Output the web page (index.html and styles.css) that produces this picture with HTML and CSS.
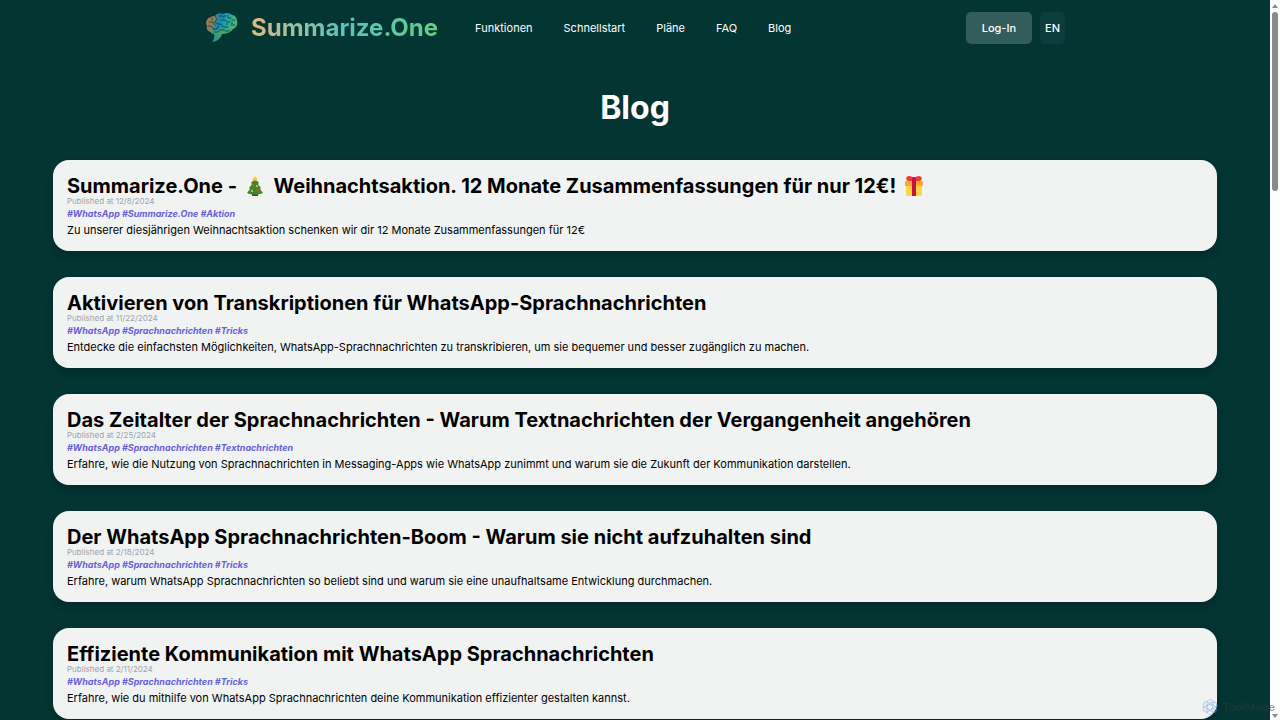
FILE: index.html
```html
<!doctype html>
<html lang="de">

<head>
    <title>Blog - Summarize.One</title>
    <meta charset="utf-8">
    <meta name="viewport" content="width=device-width, initial-scale=1">
    <link rel="stylesheet" href="styles.css">
</head>

<body>
    <div class="page">
        <header class="navbar">
            <a class="brand" href="#">
                <svg class="logo" viewBox="0 0 34 32" aria-hidden="true">
                    <defs>
                        <linearGradient id="brain" x1="0" y1="0.3" x2="1" y2="0.5">
                            <stop offset="0" stop-color="#bd7442"/>
                            <stop offset="0.25" stop-color="#7e8259"/>
                            <stop offset="0.4" stop-color="#1586b4"/>
                            <stop offset="0.7" stop-color="#2aa99f"/>
                            <stop offset="1" stop-color="#55b86c"/>
                        </linearGradient>
                        <linearGradient id="stem" x1="0" y1="1" x2="0.6" y2="0">
                            <stop offset="0" stop-color="#258f9b"/>
                            <stop offset="1" stop-color="#4bab5e"/>
                        </linearGradient>
                    </defs>
                    <path fill="url(#brain)" d="M10 4C12 1 16 .5 18 2c3-2 7-1 9 1 3 0 5 3 5 6 1 4-1 7-4 8-2 3-6 4-9 3-4 2-9 2-12 0-4 0-6-3-5-6-2-4 0-8 4-9 1-1 2-1 4-1z"/>
                    <path fill="url(#stem)" d="M4 18c3 2 7 1 9-1 4 2 8 1 12-1l2 2c-2 3-7 4-10 4-1 4-5 8-10 8 2-2 3-5 2-8-2 0-4-2-5-4z"/>
                    <g fill="none" stroke="#07404a" stroke-width="0.8" stroke-linecap="round" stroke-linejoin="round">
                        <path d="M10 4l2 3-2 3 3 2h3l2 3h5M4 10h4l2 3M3 14h3l2 3h5M14 4h4l1 2M23 3v3h3M16 8h4l2 2h3M27 8h3M26 13h4M9 20h4l2-2h4M20 19h5M14 14l-2 2"/>
                    </g>
                    <g fill="#07404a">
                        <circle cx="20" cy="4" r="0.8"/>
                        <circle cx="27" cy="11" r="0.8"/>
                        <circle cx="22" cy="12" r="0.8"/>
                        <circle cx="7" cy="7" r="0.8"/>
                    </g>
                </svg>
                <span class="brand-name">Summarize.One</span>
            </a>
            <nav class="links">
                <a href="#">Funktionen</a>
                <a href="#">Schnellstart</a>
                <a href="#">Pläne</a>
                <a href="#">FAQ</a>
                <a href="#">Blog</a>
            </nav>
            <div class="actions">
                <button class="btn btn-login" type="button">Log-In</button>
                <button class="btn btn-lang" type="button">EN</button>
            </div>
        </header>

        <main class="blog">
            <h1>Blog</h1>
            <article class="post">
                <h2>Summarize.One -
                    <svg class="emoji" viewBox="0 0 20 20" role="img" aria-label="Weihnachtsbaum">
                        <path fill="#6b3f2c" d="M7 17h6v3H7z"/>
                        <path fill="#43872b" d="M10 2l4 5-1 1 3 4-1 1 3 4c-4 2-12 2-16 0l3-4-1-1 3-4-1-1z"/>
                        <path fill="#ffc23b" d="M10 0l1 2 2 .2-1.500 1.300.5 2-2-1-2 1 .5-2L7 2.200 9 2z"/>
                        <g fill="#e34b3c"><circle cx="8" cy="9" r="1"/><circle cx="13" cy="14" r="1"/></g>
                        <g fill="#f5c84b"><circle cx="12" cy="10" r="1"/><circle cx="7" cy="15" r="1"/></g>
                    </svg>
                    Weihnachtsaktion. 12 Monate Zusammenfassungen für nur 12€!
                    <svg class="emoji" viewBox="0 0 20 20" role="img" aria-label="Geschenk">
                        <path fill="#fdd444" d="M2 8h16v10q0 2-2 2H4q-2 0-2-2z"/>
                        <rect x="1" y="5" width="18" height="5" rx="1" fill="#fba832"/>
                        <path fill="#f03b32" d="M10 5H4C1 4 2 0 5 0c2 0 4 1 5 2 1-1 3-2 5-2 3 0 4 4 1 5z"/>
                        <path fill="#c3123e" d="M8 2q2-2 4 0v18H8z"/>
                    </svg>
                </h2>
                <time class="date" datetime="2024-12-08">Published at 12/8/2024</time>
                <p class="tags">#WhatsApp #Summarize.One #Aktion</p>
                <p class="excerpt">Zu unserer diesjährigen Weihnachtsaktion schenken wir dir 12 Monate Zusammenfassungen für 12€</p>
            </article>
            <article class="post">
                <h2>Aktivieren von Transkriptionen für WhatsApp-Sprachnachrichten</h2>
                <time class="date" datetime="2024-11-22">Published at 11/22/2024</time>
                <p class="tags">#WhatsApp #Sprachnachrichten #Tricks</p>
                <p class="excerpt">Entdecke die einfachsten Möglichkeiten, WhatsApp-Sprachnachrichten zu transkribieren, um sie bequemer und besser zugänglich zu machen.</p>
            </article>
            <article class="post">
                <h2>Das Zeitalter der Sprachnachrichten - Warum Textnachrichten der Vergangenheit angehören</h2>
                <time class="date" datetime="2024-02-25">Published at 2/25/2024</time>
                <p class="tags">#WhatsApp #Sprachnachrichten #Textnachrichten</p>
                <p class="excerpt">Erfahre, wie die Nutzung von Sprachnachrichten in Messaging-Apps wie WhatsApp zunimmt und warum sie die Zukunft der Kommunikation darstellen.</p>
            </article>
            <article class="post">
                <h2>Der WhatsApp Sprachnachrichten-Boom - Warum sie nicht aufzuhalten sind</h2>
                <time class="date" datetime="2024-02-18">Published at 2/18/2024</time>
                <p class="tags">#WhatsApp #Sprachnachrichten #Tricks</p>
                <p class="excerpt">Erfahre, warum WhatsApp Sprachnachrichten so beliebt sind und warum sie eine unaufhaltsame Entwicklung durchmachen.</p>
            </article>
            <article class="post">
                <h2>Effiziente Kommunikation mit WhatsApp Sprachnachrichten</h2>
                <time class="date" datetime="2024-02-11">Published at 2/11/2024</time>
                <p class="tags">#WhatsApp #Sprachnachrichten #Tricks</p>
                <p class="excerpt">Erfahre, wie du mithilfe von WhatsApp Sprachnachrichten deine Kommunikation effizienter gestalten kannst.</p>
            </article>
        </main>
    </div>

    <div class="scrollbar" aria-hidden="true">
        <span class="arrow arrow-up"></span>
        <span class="thumb"></span>
        <span class="arrow arrow-down"></span>
    </div>

    <div class="watermark">
        <svg viewBox="0 0 16 16" aria-hidden="true">
            <g fill="none" stroke="#6f9be8" stroke-width="1">
                <path id="petal" d="M8 5l3 2V3c0-3-5-3-6 0v5"/>
                <use href="#petal" transform="rotate(60 8 8)"/>
                <use href="#petal" transform="rotate(120 8 8)"/>
                <use href="#petal" transform="rotate(180 8 8)"/>
                <use href="#petal" transform="rotate(240 8 8)"/>
                <use href="#petal" transform="rotate(300 8 8)"/>
            </g>
        </svg>
        <span>ToolMage</span>
    </div>
</body>

</html>
```
FILE: styles.css
```css
* {
    box-sizing: border-box;
}

body {
    margin: 0;
    height: 100vh;
    display: flex;
    overflow: hidden;
    background-color: #033533;
    color: #000;
    font-family: Inter, "Liberation Sans", sans-serif;
}

h1, h2, p {
    margin: 0;
}

.page {
    flex: 1;
    min-width: 0;
    overflow: hidden;
}

/* navigation */
.navbar {
    display: flex;
    align-items: center;
    max-width: 860px;
    height: 56px;
    margin: 0 auto;
}

.brand {
    display: flex;
    align-items: center;
    gap: 12px;
    text-decoration: none;
}

.logo {
    width: 34px;
    height: 32px;
}

.brand-name {
    font-size: 24px;
    font-weight: 700;
    line-height: 32px;
    background: linear-gradient(to right, #dfb887, #56c5bd 50%, #62d081);
    -webkit-background-clip: text;
    background-clip: text;
    color: transparent;
}

.links {
    display: flex;
    gap: 31px;
    margin-left: 37px;
}

.links a {
    color: #fff;
    font-size: 11px;
    font-weight: 400;
    line-height: 16px;
    text-decoration: none;
}

.actions {
    display: flex;
    gap: 8px;
    margin-left: auto;
}

.btn {
    height: 32px;
    border: 0;
    border-radius: 5px;
    color: #fff;
    font-family: inherit;
    font-size: 11px;
    font-weight: 500;
}

.btn-login {
    padding: 0 16px;
    background-color: #335d5c;
}

.btn-lang {
    padding: 0 5px;
    background-color: #0d3d3c;
}

/* posts */
.blog {
    display: flex;
    flex-direction: column;
    gap: 26px;
    padding: 26px 53px;
}

h1 {
    color: #fff;
    font-size: 32px;
    font-weight: 700;
    line-height: 52px;
    text-align: center;
}

.post {
    display: flex;
    flex-direction: column;
    padding: 14px 14px 13px;
    border-radius: 16px;
    background-color: #f1f3f2;
    box-shadow: 0 4px 8px rgba(0, 0, 0, 0.2);
}

h2 {
    font-size: 20px;
    font-weight: 700;
    line-height: 24px;
}

.emoji {
    width: 20px;
    height: 20px;
    margin: 0 4px 0 3px;
    vertical-align: -3px;
}

.date {
    color: #9ca3af;
    font-size: 8px;
    line-height: 6px;
}

.tags {
    color: #6661d8;
    font-size: 9px;
    font-style: italic;
    font-weight: 700;
    line-height: 16px;
    margin-top: 2px;
}

.excerpt {
    font-size: 11px;
    line-height: 16px;
}

/* scrollbar */
.scrollbar {
    display: flex;
    flex-direction: column;
    align-items: center;
    width: 10px;
    padding: 4px 0 2px;
    background-color: #fcfcfc;
}

.arrow {
    border: 3px solid transparent;
}

.arrow-up {
    border-top: 0;
    border-bottom: 4px solid #8b8b8b;
}

.arrow-down {
    border-bottom: 0;
    border-top: 4px solid #8b8b8b;
    margin-top: auto;
}

.thumb {
    width: 6px;
    height: 25%;
    margin-top: 4px;
    border-radius: 3px;
    background-color: #8b8b8b;
}

.watermark {
    position: fixed;
    right: 5px;
    bottom: 5px;
    display: flex;
    align-items: center;
    gap: 4px;
    color: #2b3d3d;
    font-size: 11px;
    font-weight: 600;
    opacity: 0.5;
}

.watermark svg {
    width: 16px;
    height: 16px;
}
```
